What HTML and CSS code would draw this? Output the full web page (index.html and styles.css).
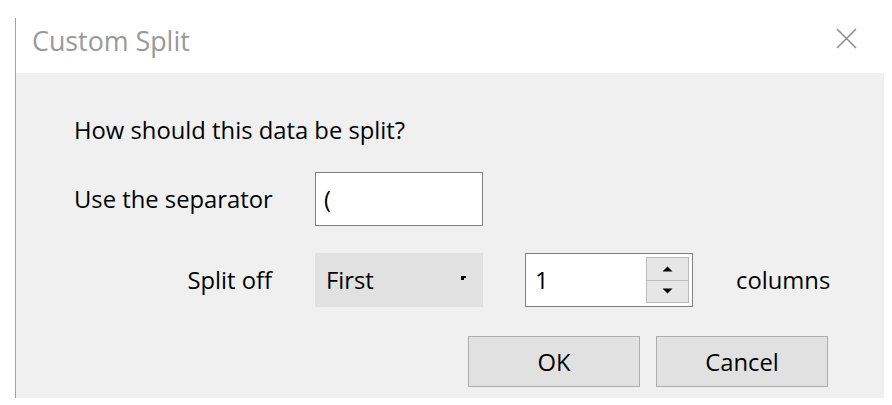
FILE: index.html
```html
<!DOCTYPE html>
<html>
<head>
<meta charset="utf-8">
<link rel="stylesheet" href="styles.css">
</head>
<body>
<div class="dialog">
  <div class="titlebar">
    <span class="title">Custom Split</span>
    <svg class="close" width="21" height="21" viewBox="0 0 21 21"><path d="M1 1 L20 20 M20 1 L1 20" stroke="#8a8a8a" stroke-width="1.5" fill="none"/></svg>
  </div>
  <div class="content">
    <div class="question">How should this data be split?</div>
    <div class="grid">
      <div class="label">Use the separator</div>
      <div class="textbox">(</div>
      <div></div>
      <div></div>
      <div class="label">Split off</div>
      <div class="combo"><span>First</span><svg class="caret" width="5" height="5" viewBox="0 0 5 5"><path d="M0 0 H5 V2 L3 2 L3 4 H0 Z" fill="#000"/></svg></div>
      <div class="spin">
        <span>1</span>
        <div class="spinbtns">
          <div class="sb"><svg width="11" height="6" viewBox="0 0 11 6"><path d="M0.5 5.5 L5.5 0.5 L10.5 5.5 Z" fill="#000"/></svg></div>
          <div class="sb"><svg width="11" height="6" viewBox="0 0 11 6"><path d="M0.5 0.5 L10.5 0.5 L5.5 5.5 Z" fill="#000"/></svg></div>
        </div>
      </div>
      <div class="unit">columns</div>
    </div>
    <div class="buttons">
      <div class="btn">OK</div>
      <div class="btn">Cancel</div>
    </div>
  </div>
</div>
</body>
</html>
```
FILE: styles.css
```css
html, body {
  margin: 0;
  padding: 0;
  background: #ffffff;
}
body {
  font-family: "Open Sans", "Noto Sans", sans-serif;
  color: #000;
  height: 405px;
  overflow: hidden;
}
.dialog {
  margin: 18px 0 0 15px;
  width: 868px;
  border-left: 1px solid #a3a3a3;
}
.titlebar {
  height: 55px;
  display: flex;
  align-items: center;
  justify-content: space-between;
  padding: 0 27px 0 16px;
  box-sizing: border-box;
  background: #fff;
}
.title {
  font-size: 26.8px;
  color: #999999;
  margin-top: -11px;
}
.close {
  margin-top: -14px;
}
.content {
  background: #f0f0f0;
  height: 325px;
  box-sizing: border-box;
  padding: 42px 0 0 58px;
  font-size: 23.8px;
}
.question {
  line-height: 30px;
  height: 30px;
  white-space: nowrap;
}
.grid {
  margin-top: 27px;
  display: grid;
  grid-template-columns: 199px 168px 168px auto;
  grid-template-rows: 54px 54px;
  column-gap: 42px;
  row-gap: 27px;
  align-items: center;
}
.label {
  text-align: right;
  white-space: nowrap;
  padding-right: 1px;
}
.textbox {
  height: 54px;
  box-sizing: border-box;
  background: #fff;
  border: 1px solid #7f7f7f;
  display: flex;
  align-items: center;
  padding-left: 8px;
}
.combo {
  height: 54px;
  background: #e1e1e1;
  display: flex;
  align-items: center;
  justify-content: space-between;
  padding: 0 17px 0 11px;
  box-sizing: border-box;
}
.caret {
  margin-top: -4px;
}
.spin {
  height: 54px;
  box-sizing: border-box;
  background: #fff;
  border: 1px solid #7f7f7f;
  display: flex;
  align-items: center;
  justify-content: space-between;
  padding: 3px 3px 3px 9px;
}
.spinbtns {
  width: 43px;
  height: 46px;
  display: flex;
  flex-direction: column;
  border: 1px solid #bcbcbc;
  box-sizing: border-box;
}
.sb {
  flex: 1;
  background: #e6e6e6;
  display: flex;
  align-items: center;
  justify-content: center;
}
.sb + .sb {
  border-top: 1px solid #bcbcbc;
}
.unit {
  white-space: nowrap;
  margin-left: 1px;
}
.buttons {
  margin-top: 29px;
  display: flex;
  justify-content: flex-end;
  gap: 16px;
  padding-right: 56px;
}
.btn {
  width: 172px;
  height: 51px;
  box-sizing: border-box;
  background: #e1e1e1;
  border: 1px solid #adadad;
  display: flex;
  align-items: center;
  justify-content: center;
}
```
